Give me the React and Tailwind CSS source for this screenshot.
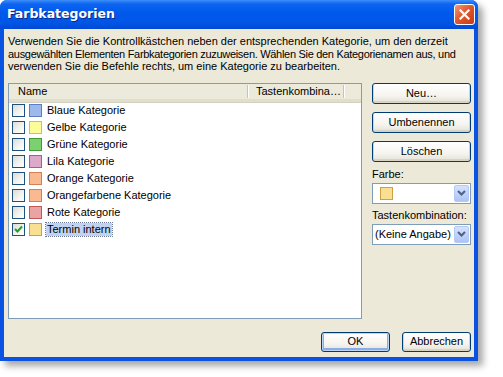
import React from 'react';

const cats = [
  { name: 'Blaue Kategorie', fill: '#9DB8EA', border: '#5B7EC4' },
  { name: 'Gelbe Kategorie', fill: '#FCFC9A', border: '#C4C45C' },
  { name: 'Grüne Kategorie', fill: '#7DD06F', border: '#3E9A3A' },
  { name: 'Lila Kategorie', fill: '#DCA9CA', border: '#A06385' },
  { name: 'Orange Kategorie', fill: '#F9BA92', border: '#D38052' },
  { name: 'Orangefarbene Kategorie', fill: '#F9BA92', border: '#D38052' },
  { name: 'Rote Kategorie', fill: '#E9A3A3', border: '#C25757' },
  { name: 'Termin intern', fill: '#F9DF92', border: '#C9A148', checked: true, selected: true },
];

function CheckBox({ checked }) {
  return (
    <div className="w-[13px] h-[13px] border border-[#1C5180] bg-[linear-gradient(135deg,#DCDCD7_0%,#F4F4F0_60%,#FFFFFF_100%)] flex items-center justify-center shrink-0">
      {checked && (
        <svg width="9" height="9" viewBox="0 0 9 9">
          <path d="M1 4 L3.5 6.5 L8 1.5" fill="none" stroke="#21A121" strokeWidth="2" />
        </svg>
      )}
    </div>
  );
}

function Swatch({ fill, border, className = '' }) {
  return (
    <div className={'w-[13px] h-[13px] border shrink-0 ' + className} style={{ background: fill, borderColor: border }} />
  );
}

function XPButton({ children, isDefault, className = '' }) {
  return (
    <div className={'rounded-[3px] border border-[#003C74] bg-[linear-gradient(180deg,#FFFFFF_0%,#F5F4EF_60%,#E3E1D6_100%)] flex items-center justify-center text-black ' + (isDefault ? 'shadow-[inset_0_0_0_1px_#BCD4F6,inset_0_-1px_0_2px_#89ADE4] ' : 'shadow-[inset_0_-1px_0_1px_#D8D4C4] ') + className}>
      {children}
    </div>
  );
}

function Combo({ children }) {
  return (
    <div className="h-[21px] border border-[#7F9DB9] bg-white flex items-center">
      <div className="flex-1 flex items-center min-w-0">{children}</div>
      <div className="w-[15px] h-[17px] mr-[1px] rounded-[2px] border border-[#B5C8F6] bg-[linear-gradient(180deg,#D6E3FE_0%,#BDD0FA_60%,#AEC4F6_100%)] flex items-center justify-center">
        <svg width="9" height="6" viewBox="0 0 9 6">
          <path d="M1 1 L4.5 4.5 L8 1" fill="none" stroke="#4D6185" strokeWidth="2" />
        </svg>
      </div>
    </div>
  );
}

export default function App() {
  return (
    <div className="w-[503px] h-[377px] bg-white" style={{ fontFamily: '"Liberation Sans", Arial, sans-serif' }}>
      <div className="w-[478px] h-[361px] flex flex-col rounded-t-[7px] bg-[#0A52E2] shadow-[5px_5px_7px_rgba(0,0,0,0.35)]">
        {/* title bar */}
        <div className="h-[29px] shrink-0 rounded-t-[7px] bg-[linear-gradient(180deg,#3D8FF8_0%,#0C64F0_14%,#0059EC_45%,#0055E5_80%,#0049D4_100%)] flex items-center pl-[7px] pr-[3px]">
          <span className="text-white font-bold text-[13px] flex-1 [text-shadow:1px_1px_0_#0A2A8C]" style={{ fontFamily: '"DejaVu Sans", sans-serif', fontSize: '12.5px' }}>
            Farbkategorien
          </span>
          <div className="w-[21px] h-[21px] rounded-[3px] border border-white bg-[linear-gradient(135deg,#F09A7A_0%,#E0582F_45%,#C73A18_100%)] flex items-center justify-center">
            <svg width="11" height="11" viewBox="0 0 11 11">
              <path d="M1.5 1.5 L9.5 9.5 M9.5 1.5 L1.5 9.5" stroke="white" strokeWidth="2.2" strokeLinecap="square" />
            </svg>
          </div>
        </div>
        {/* client */}
        <div className="flex-1 mx-[4px] mb-[4px] bg-[#ECE9D8] flex flex-col text-[11px] text-black">
          <div className="mt-[6px] ml-[4px] leading-[12.5px] whitespace-nowrap">
            <div>Verwenden Sie die Kontrollkästchen neben der entsprechenden Kategorie, um den derzeit</div>
            <div className="tracking-[-0.3px]">ausgewählten Elementen Farbkategorien zuzuweisen. Wählen Sie den Kategorienamen aus, und</div>
            <div>verwenden Sie die Befehle rechts, um eine Kategorie zu bearbeiten.</div>
          </div>
          <div className="flex mt-[10px] ml-[4px] gap-[10px]">
            {/* list box */}
            <div className="w-[354px] h-[236px] border border-[#7F9DB9] bg-white flex flex-col">
              <div className="h-[18px] flex items-center bg-[#EBEADB] border-b-[3px] border-[#E2DECD] shadow-[0_1px_0_#D6D2C2]">
                <div className="w-[238px] pl-[9px]">Name</div>
                <div className="w-px h-[13px] bg-[#C7C5B2] shadow-[1px_0_0_white]" />
                <div className="w-[95px] pl-[8px]">Tastenkombina…</div>
                <div className="w-px h-[13px] bg-[#C7C5B2] shadow-[1px_0_0_white]" />
              </div>
              <div className="flex flex-col">
                {cats.map((c) => (
                  <div key={c.name} className="h-[17px] flex items-center">
                    <div className="ml-[3px]"><CheckBox checked={c.checked} /></div>
                    <Swatch fill={c.fill} border={c.border} className="ml-[4px]" />
                    <span className={'ml-[4px] px-[1px] leading-[13px] ' + (c.selected ? 'bg-[#C1D3F0] outline outline-1 outline-dotted outline-[#6B7A99]' : '')}>
                      {c.name}
                    </span>
                  </div>
                ))}
              </div>
            </div>
            {/* right column */}
            <div className="w-[99px] flex flex-col">
              <XPButton className="h-[21px]">Neu…</XPButton>
              <XPButton className="h-[21px] mt-[8px]">Umbenennen</XPButton>
              <XPButton className="h-[21px] mt-[8px]">Löschen</XPButton>
              <div className="mt-[5px] leading-[14px]">Farbe:</div>
              <div className="mt-[2px]">
                <Combo>
                  <Swatch fill="#F9DF92" border="#C9A148" className="ml-[7px] w-[13px] h-[12px]" />
                </Combo>
              </div>
              <div className="mt-[4px] leading-[14px]">Tastenkombination:</div>
              <div className="mt-[2px]">
                <Combo>
                  <span className="ml-[2px]">(Keine Angabe)</span>
                </Combo>
              </div>
            </div>
          </div>
          <div className="flex justify-end gap-[12px] mt-[13px] mr-[3px]">
            <XPButton isDefault className="w-[69px] h-[20px]">OK</XPButton>
            <XPButton className="w-[69px] h-[20px]">Abbrechen</XPButton>
          </div>
        </div>
      </div>
    </div>
  );
}
